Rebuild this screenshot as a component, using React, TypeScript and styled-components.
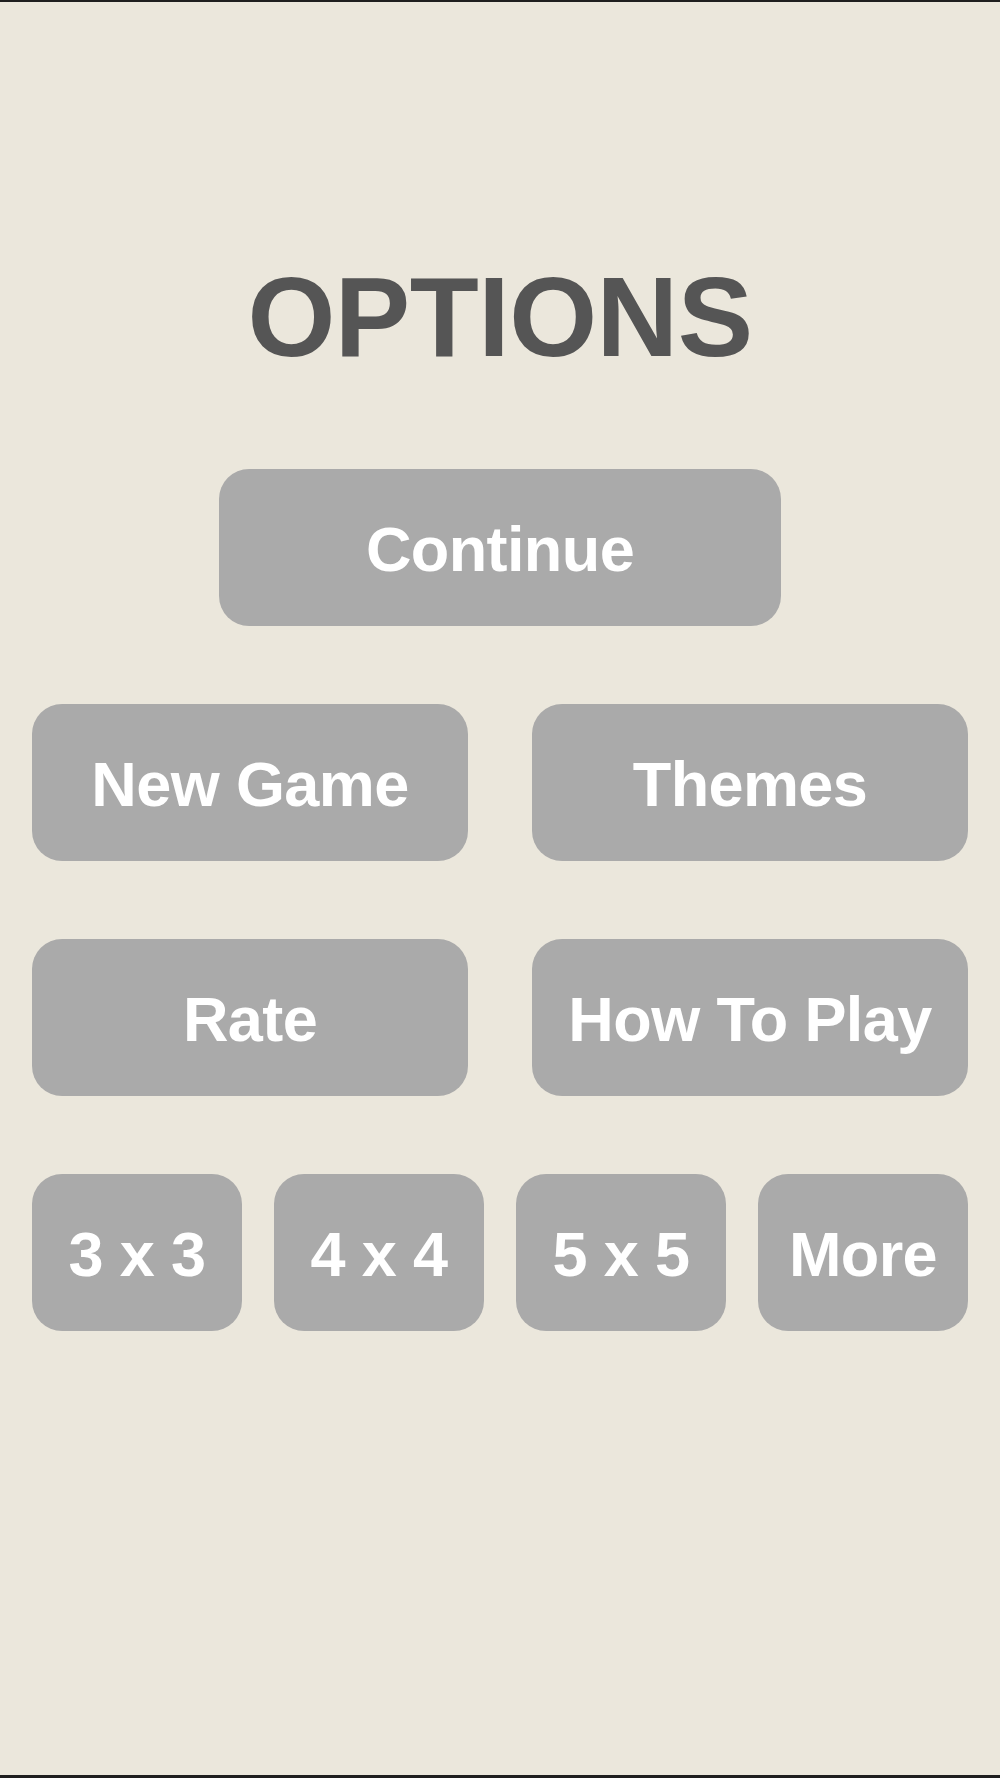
import React from "react";
import styled, { createGlobalStyle } from "styled-components";

const GlobalStyle = createGlobalStyle`
  html, body {
    margin: 0;
    padding: 0;
    background: #ebe7dc;
  }
  * { box-sizing: border-box; }
`;

const Screen = styled.div`
  width: 1000px;
  height: 1778px;
  background: #ebe7dc;
  border-top: 2px solid #1f1f1f;
  border-bottom: 3px solid #1f1f1f;
  padding: 259px 32px 0;
  display: flex;
  flex-direction: column;
  align-items: center;
  font-family: "Liberation Sans", Arial, Helvetica, sans-serif;
`;

const Title = styled.h1`
  margin: 0 0 95px;
  font-size: 113px;
  line-height: 1;
  font-weight: 700;
  letter-spacing: -0.5px;
  color: #555555;
`;

const Menu = styled.div`
  width: 100%;
  display: flex;
  flex-direction: column;
  align-items: center;
  gap: 78px;
`;

const Row = styled.div<{ $cols: number; $gap: number }>`
  width: 100%;
  display: grid;
  grid-template-columns: repeat(${(p) => p.$cols}, 1fr);
  column-gap: ${(p) => p.$gap}px;
`;

const Button = styled.button<{ $width?: number }>`
  width: ${(p) => (p.$width ? `${p.$width}px` : "100%")};
  height: 157px;
  border: none;
  border-radius: 30px;
  background: #aaaaaa;
  color: #ffffff;
  font-family: "Liberation Sans", Arial, Helvetica, sans-serif;
  font-weight: 700;
  font-size: 63px;
  letter-spacing: -0.6px;
  line-height: 1;
  padding: 3px 0 0;
  display: flex;
  align-items: center;
  justify-content: center;
  white-space: nowrap;
  cursor: pointer;
`;

export default function App() {
  return (
    <>
      <GlobalStyle />
      <Screen>
        <Title>OPTIONS</Title>
        <Menu>
          <Button $width={562}>Continue</Button>
          <Row $cols={2} $gap={64}>
            <Button>New Game</Button>
            <Button>Themes</Button>
          </Row>
          <Row $cols={2} $gap={64}>
            <Button>Rate</Button>
            <Button>How To Play</Button>
          </Row>
          <Row $cols={4} $gap={32}>
            <Button>3 x 3</Button>
            <Button>4 x 4</Button>
            <Button>5 x 5</Button>
            <Button>More</Button>
          </Row>
        </Menu>
      </Screen>
    </>
  );
}
